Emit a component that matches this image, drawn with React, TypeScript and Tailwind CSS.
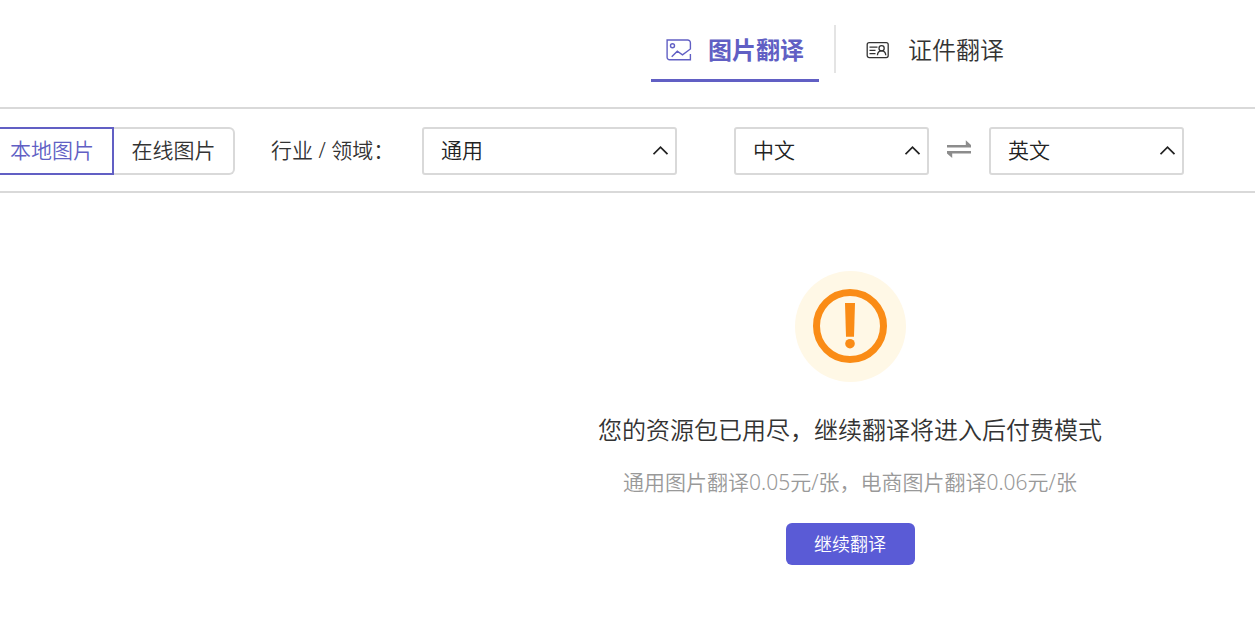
import React, { useState } from 'react';

const industries = ['通用', '电商'];
const languages = ['中文', '英文'];

const PictureIcon = () => (
    <svg className="w-[26px] h-[26px]" viewBox="0 0 26 26" fill="none" stroke="currentColor" strokeWidth="1.4" aria-hidden="true">
        <path d="M24.4 17v5.8H3.6a2.5 2.5 0 0 1-2.5-2.5V3H21.6a2.8 2.8 0 0 1 2.8 2.8V12l-7.9 5.8-5.2-3.6-5.6 5.6" />
        <circle cx="6.5" cy="8.8" r="2" />
    </svg>
);

const CardIcon = () => (
    <svg className="w-[26px] h-[26px]" viewBox="0 0 26 26" fill="none" stroke="currentColor" strokeWidth="1.3" aria-hidden="true">
        <rect x="1.2" y="5.6" width="21" height="15" rx="2" />
        <path d="M3.5 10.1h8M3.5 13.4h6M3.5 16.7h6" />
        <circle cx="15.6" cy="11.2" r="2.6" />
        <path d="M11.4 18.2c.2-2.8 1.7-4.4 4.2-4.4s4 1.6 4.2 4.4" />
    </svg>
);

const SwapIcon = () => (
    <svg className="w-6 h-6" viewBox="0 0 24 24" aria-hidden="true">
        <path d="M0 6h18.8V1.2L24 6v2.6H0zM24 12v2.6H5.2v4.4L0 14.6V12z" fill="#8c8c8c" />
    </svg>
);

const WarningIcon = () => (
    <svg className="w-28 h-28" viewBox="0 0 112 112" aria-hidden="true">
        <circle cx="56.5" cy="56.5" r="55.5" fill="#fff8e6" />
        <circle cx="56" cy="56" r="33.5" fill="none" stroke="#fa8c16" strokeWidth="7" />
        <path d="M51 33h10l-1 33.7h-8z" fill="#fa8c16" />
        <circle cx="56" cy="73.7" r="4.8" fill="#fa8c16" />
    </svg>
);

interface SelectProps {
    id: string;
    label?: string;
    className: string;
    options: string[];
    value: string;
    onChange: (value: string) => void;
}

const Select: React.FC<SelectProps> = ({ id, label, className, options, value, onChange }) => (
    <div className={`relative ${className}`}>
        <select
            id={id}
            aria-label={label}
            value={value}
            onChange={(e) => onChange(e.target.value)}
            className="w-full h-12 pl-[17px] pr-10 appearance-none bg-white border-2 border-[#d9d9d9] rounded-[3px] text-[21px] text-[#222]"
        >
            {options.map((option) => (
                <option key={option}>{option}</option>
            ))}
        </select>
        <svg className="absolute right-2 top-4 w-4 h-4 pointer-events-none" viewBox="0 0 16 16" fill="none" stroke="#222" strokeWidth="1.8" aria-hidden="true">
            <path d="M.5 11.2 7.5 4.2l7 7" />
        </svg>
    </div>
);

const App: React.FC = () => {
    const [industry, setIndustry] = useState('通用');
    const [source, setSource] = useState('中文');
    const [target, setTarget] = useState('英文');

    const swap = () => {
        setSource(target);
        setTarget(source);
    };

    return (
        <div className="min-h-screen bg-white font-['Noto_Sans','Noto_Sans_CJK_SC',sans-serif] font-[350] text-[#333] whitespace-nowrap">
            {/* TABS */}
            <header className="border-b-2 border-[#d9d9d9] pt-5 pb-[25px] pl-[415px]">
                <nav className="flex justify-center text-2xl">
                    <a href="#image" className="flex items-center gap-4 h-[62px] px-[15px] border-b-3 border-[#615fc4] text-[#615fc4] font-bold">
                        <PictureIcon />
                        图片翻译
                    </a>
                    <div className="w-0.5 h-12 mt-[5px] mx-[15px] bg-[#e4e4e4]" />
                    <a href="#card" className="flex items-center gap-4 h-[62px] px-[15px] border-b-3 border-transparent">
                        <CardIcon />
                        证件翻译
                    </a>
                </nav>
            </header>

            {/* TOOLBAR */}
            <div className="flex items-center pt-[18px] pb-4 border-b-2 border-[#d9d9d9] text-[21px]">
                <button className="w-[114px] h-12 pl-2.5 text-left border-2 border-l-0 border-[#615fc4] text-[#615fc4]">本地图片</button>
                <button className="w-[121px] h-12 border-2 border-l-0 border-[#d9d9d9] rounded-r-md">在线图片</button>
                <label htmlFor="industry" className="w-[151px] ml-9">行业 / 领域：</label>
                <Select id="industry" className="w-[255px] mr-[57px]" options={industries} value={industry} onChange={setIndustry} />
                <Select id="source" label="源语言" className="w-[195px]" options={languages} value={source} onChange={setSource} />
                <button onClick={swap} aria-label="互换语言" className="mx-[18px]">
                    <SwapIcon />
                </button>
                <Select id="target" label="目标语言" className="w-[195px]" options={languages} value={target} onChange={setTarget} />
            </div>

            {/* QUOTA NOTICE */}
            <main className="flex flex-col items-center pt-[77px] pb-16 pl-[445px]">
                <WarningIcon />
                <h1 className="mt-[30px] text-2xl leading-9">您的资源包已用尽，继续翻译将进入后付费模式</h1>
                <p className="mt-[18px] text-[21px] leading-8 text-[#999]">通用图片翻译0.05元/张，电商图片翻译0.06元/张</p>
                <button className="w-[129px] h-[42px] mt-[25px] rounded-md bg-[#5a5bd6] text-lg text-white">继续翻译</button>
            </main>
        </div>
    );
};

export default App;
